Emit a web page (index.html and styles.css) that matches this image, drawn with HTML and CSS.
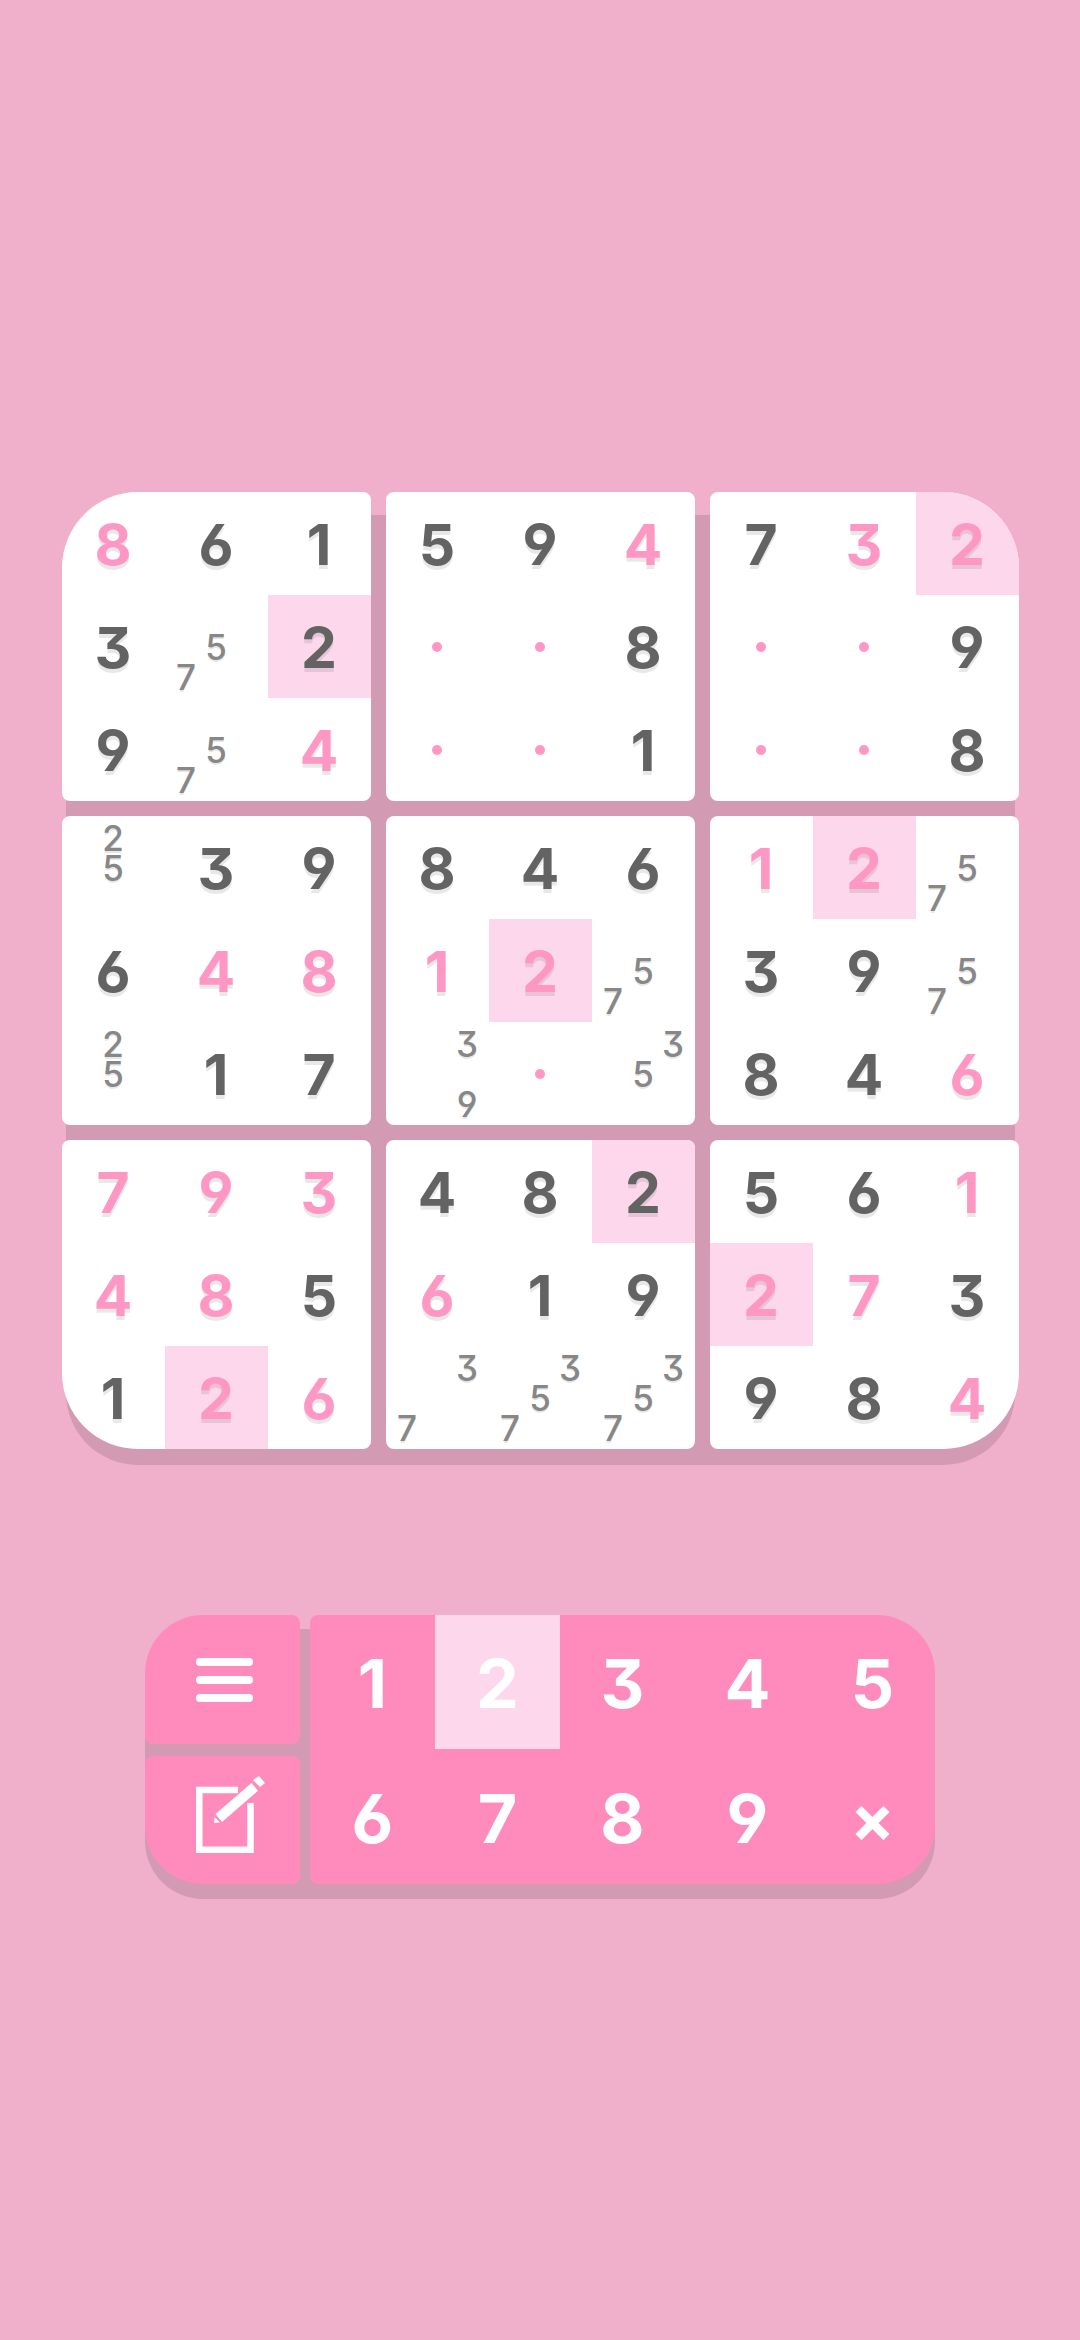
FILE: index.html
```html
<!DOCTYPE html>
<html lang="en">
<head>
<meta charset="utf-8">
<title>Sudoku</title>
<link rel="stylesheet" href="styles.css">
</head>
<body>
<main class="screen">
  <section class="board">
    <div class="block b-tl">
      <div class="cell p">8</div><div class="cell">6</div><div class="cell">1</div>
      <div class="cell">3</div><div class="cell notes"><span class="n5">5</span><span class="n7">7</span></div><div class="cell hl">2</div>
      <div class="cell">9</div><div class="cell notes"><span class="n5">5</span><span class="n7">7</span></div><div class="cell p">4</div>
    </div>
    <div class="block">
      <div class="cell">5</div><div class="cell">9</div><div class="cell p">4</div>
      <div class="cell"><i class="dot"></i></div><div class="cell"><i class="dot"></i></div><div class="cell">8</div>
      <div class="cell"><i class="dot"></i></div><div class="cell"><i class="dot"></i></div><div class="cell">1</div>
    </div>
    <div class="block b-tr">
      <div class="cell">7</div><div class="cell p">3</div><div class="cell p hl">2</div>
      <div class="cell"><i class="dot"></i></div><div class="cell"><i class="dot"></i></div><div class="cell">9</div>
      <div class="cell"><i class="dot"></i></div><div class="cell"><i class="dot"></i></div><div class="cell">8</div>
    </div>
    <div class="block">
      <div class="cell notes"><span class="n2">2</span><span class="n5">5</span></div><div class="cell">3</div><div class="cell">9</div>
      <div class="cell">6</div><div class="cell p">4</div><div class="cell p">8</div>
      <div class="cell notes"><span class="n2">2</span><span class="n5">5</span></div><div class="cell">1</div><div class="cell">7</div>
    </div>
    <div class="block">
      <div class="cell">8</div><div class="cell">4</div><div class="cell">6</div>
      <div class="cell p">1</div><div class="cell p hl">2</div><div class="cell notes"><span class="n5">5</span><span class="n7">7</span></div>
      <div class="cell notes"><span class="n3">3</span><span class="n9">9</span></div><div class="cell"><i class="dot"></i></div><div class="cell notes"><span class="n3">3</span><span class="n5">5</span></div>
    </div>
    <div class="block">
      <div class="cell p">1</div><div class="cell p hl">2</div><div class="cell notes"><span class="n5">5</span><span class="n7">7</span></div>
      <div class="cell">3</div><div class="cell">9</div><div class="cell notes"><span class="n5">5</span><span class="n7">7</span></div>
      <div class="cell">8</div><div class="cell">4</div><div class="cell p">6</div>
    </div>
    <div class="block b-bl">
      <div class="cell p">7</div><div class="cell p">9</div><div class="cell p">3</div>
      <div class="cell p">4</div><div class="cell p">8</div><div class="cell">5</div>
      <div class="cell">1</div><div class="cell p hl">2</div><div class="cell p">6</div>
    </div>
    <div class="block">
      <div class="cell">4</div><div class="cell">8</div><div class="cell hl">2</div>
      <div class="cell p">6</div><div class="cell">1</div><div class="cell">9</div>
      <div class="cell notes"><span class="n3">3</span><span class="n7">7</span></div><div class="cell notes"><span class="n3">3</span><span class="n5">5</span><span class="n7">7</span></div><div class="cell notes"><span class="n3">3</span><span class="n5">5</span><span class="n7">7</span></div>
    </div>
    <div class="block b-br">
      <div class="cell">5</div><div class="cell">6</div><div class="cell p">1</div>
      <div class="cell p hl">2</div><div class="cell p">7</div><div class="cell">3</div>
      <div class="cell">9</div><div class="cell">8</div><div class="cell p">4</div>
    </div>
  </section>

  <section class="keypad">
    <div class="tools">
      <button class="tool tool-top" aria-label="Menu">
        <svg class="icon" viewBox="0 0 155 129" width="155" height="129"><path d="M55 47H104M55 65H104M55 83H104" fill="none" stroke="#fff" stroke-width="8" stroke-linecap="round"/></svg>
      </button>
      <button class="tool tool-bottom" aria-label="Notes">
        <svg class="icon" viewBox="0 0 155 128" width="155" height="128"><path d="M93 34H54.300V93.700H105.500V47" fill="none" stroke="#fff" stroke-width="6.500"/><path d="M70.500 58L106.500 27L113 34.700L77 66Z" fill="#fff"/><path d="M69.500 61L75 66.500L69 67Z" fill="#fff"/><path d="M108 24L114 20L120 27L115 31Z" fill="#fff"/></svg>
      </button>
    </div>
    <div class="digits">
      <div class="key">1</div><div class="key on">2</div><div class="key">3</div><div class="key">4</div><div class="key">5</div>
      <div class="key">6</div><div class="key">7</div><div class="key">8</div><div class="key">9</div><div class="key cross">×</div>
    </div>
  </section>
</main>
</body>
</html>
```

FILE: styles.css
```css
* { box-sizing: border-box; }
html, body { margin: 0; padding: 0; }
body { width: 1080px; height: 2340px; background: #f0b0cb; font-family: "Inter", "Noto Sans", sans-serif; font-feature-settings: "cv03", "cv04", "cv09"; overflow: hidden; }

.screen { display: flex; flex-direction: column; align-items: center; padding-top: 492px; }

.board { position: relative; display: grid; grid-template-columns: repeat(3, 309px); gap: 15px; }
.board::before { content: ""; position: absolute; inset: 23px 4px -16px 4px; background: #d29ab3; border-radius: 72px; }

.block { position: relative; display: grid; grid-template-columns: repeat(3, 103px); grid-auto-rows: 103px; background: #fff; border-radius: 8px; overflow: hidden; }
.b-tl { border-top-left-radius: 76px; }
.b-tr { border-top-right-radius: 76px; }
.b-bl { border-bottom-left-radius: 76px; }
.b-br { border-bottom-right-radius: 76px; }

.cell { display: flex; align-items: center; justify-content: center; padding-top: 2px; font-size: 57px; font-weight: 650; line-height: 1; color: #636363; text-shadow: 0 4px 0 rgba(0, 0, 0, .09); }
.p { color: #ff97c4; }
.hl { background: #fdd7eb; }
.dot { width: 10px; height: 10px; margin-top: -2px; border-radius: 50%; background: #ff97c4; }

.notes { display: grid; grid-template-columns: repeat(3, 30px); grid-template-rows: repeat(3, 30px); align-content: center; justify-content: center; padding-top: 0; font-size: 35px; font-weight: 550; color: #878787; text-shadow: 0 2px 0 rgba(0, 0, 0, .09); }
.notes span { display: flex; align-items: center; justify-content: center; line-height: 30px; height: 30px; }
.n2 { grid-area: 1 / 2; }
.n3 { grid-area: 1 / 3; }
.n5 { grid-area: 2 / 2; }
.n7 { grid-area: 3 / 1; }
.n9 { grid-area: 3 / 3; }

.keypad { position: relative; display: grid; grid-template-columns: 155px 625px; column-gap: 10px; margin-top: 166px; }
.keypad::before { content: ""; position: absolute; inset: 14px 0 -15px 0; background: #d29ab3; border-radius: 58px; }

.tools { position: relative; display: grid; grid-template-rows: 129px 128px; row-gap: 12px; }
.tool { display: flex; align-items: center; justify-content: center; padding: 0; border: 0; background: #ff8bbd; border-radius: 8px; }
.tool-top { border-top-left-radius: 58px; }
.tool-bottom { border-bottom-left-radius: 58px; }

.digits { position: relative; display: grid; grid-template-columns: repeat(5, 125px); grid-template-rows: 134px 135px; background: #ff8bbd; border-radius: 8px 58px 58px 8px; overflow: hidden; }
.key { display: flex; align-items: center; justify-content: center; padding-top: 2px; font-size: 68px; font-weight: 650; line-height: 1; color: #fff; }
.on { background: #fdd7eb; }
.cross { font-size: 66px; }
```
